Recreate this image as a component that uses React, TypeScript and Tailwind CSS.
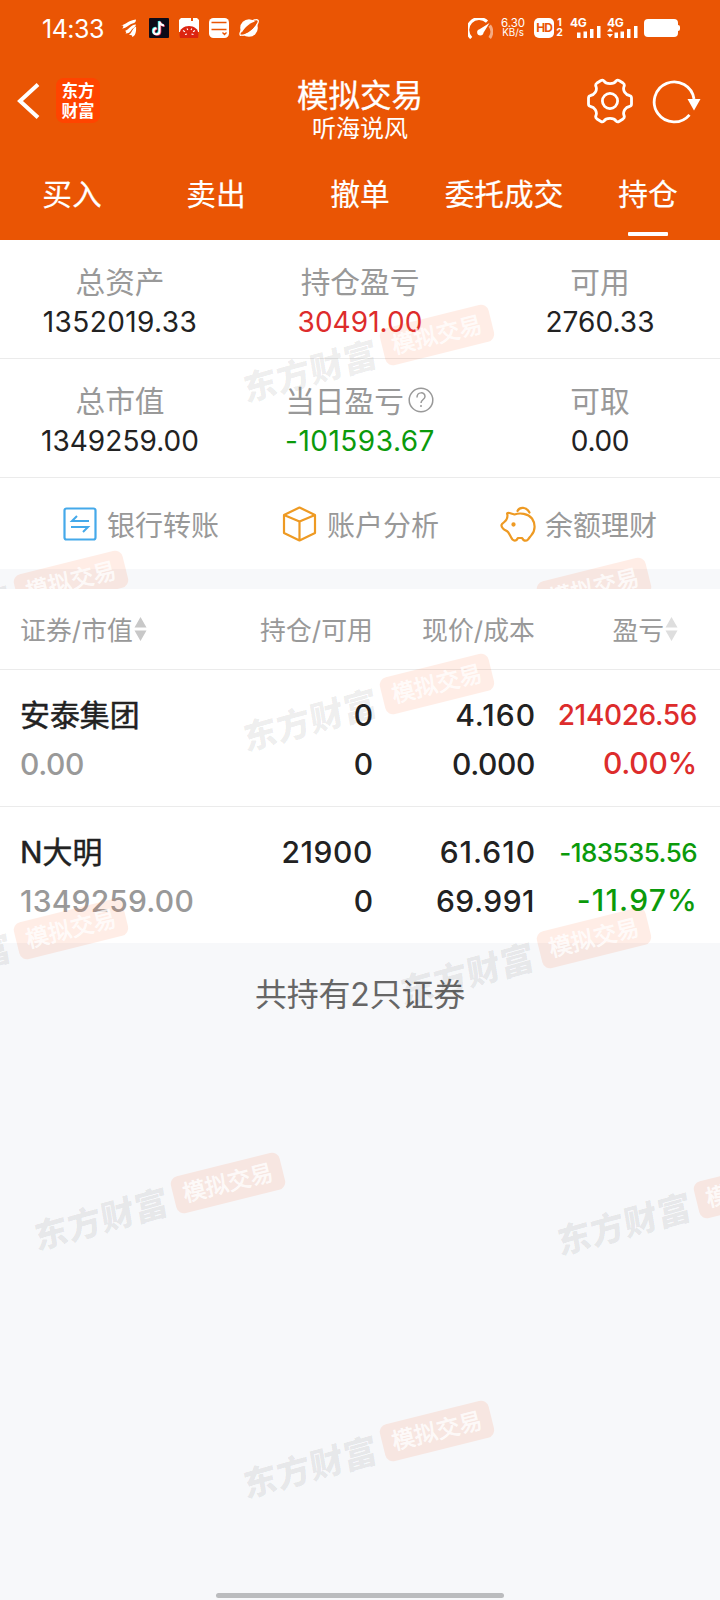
import React from "react";

type Tone = "dark" | "red" | "green";

const toneClass: Record<Tone, string> = {
  dark: "text-[#222222]",
  red: "text-[#dd2c2c]",
  green: "text-[#0b9a0b]",
};

const latin = "font-['Inter','Noto_Sans_CJK_SC',sans-serif]";

function Watermark({ x, y }: { x: number; y: number }) {
  return (
    <div
      className="pointer-events-none absolute flex h-[38px] w-[254px] origin-[198px_19px] -rotate-[14deg] items-center justify-between"
      style={{ left: x - 140, top: y + 12 }}
      aria-hidden
    >
      <span className="-translate-x-[3px] translate-y-[5px] -rotate-[1.5deg] -skew-x-6 whitespace-nowrap text-[34px] leading-none font-black tracking-[0.6px] text-black/[0.075]">
        东方财富
      </span>
      <span className="flex h-[38px] w-[112px] items-center justify-center rounded-[8px] bg-[#ff5a1e]/[0.11] text-[23px] leading-none whitespace-nowrap text-white/75 [-webkit-text-stroke:0.6px_rgba(255,255,255,0.75)]">
        模拟交易
      </span>
    </div>
  );
}

function StatusBar() {
  return (
    <div className="flex h-[56px] items-center pr-[40px] pl-[42px] text-white">
      <span className="w-[64px] whitespace-nowrap pt-[2px] text-[25px] leading-none tracking-[-0.5px]">14:33</span>
      <svg className="ml-[15px]" width="16" height="18" viewBox="0 0 16 18" fill="#fff">
        <path d="M0 6.500C5 5.500 7 1.500 15 .5c0 2.500-1 3.500-3.500 4C7.500 5.500 6 9 1 9.500c1.500-1 1.500-2 1-3zM4 12c4-1.500 5-6 11-6.500-.5 3-3.500 3.500-4.500 5.500-1.500 2.500-3 3.500-6 3.500 1-1 1-2-.5-2.500zM8 16c3-2 3.500-7 7-8.500.5 4.500-.5 10-4 10.500.5-1.200.5-2.500-3-2z" />
      </svg>
      <svg className="ml-[12px]" width="20" height="20" viewBox="0 0 20 20">
        <rect width="20" height="20" rx="1" fill="#0d0b18" />
        <g fill="none" strokeWidth="2">
          <path d="M10.500 3.500v9.700a3 3 0 1 1-3-3M10.500 3.500c.5 2.500 2 3.700 4.500 3.900" stroke="#26e6e0" transform="translate(-.7 -.5)" />
          <path d="M10.500 3.500v9.700a3 3 0 1 1-3-3M10.500 3.500c.5 2.500 2 3.700 4.500 3.900" stroke="#f23a5e" transform="translate(.8 .5)" />
          <path d="M10.500 3.500v9.700a3 3 0 1 1-3-3M10.500 3.500c.5 2.500 2 3.700 4.500 3.900" stroke="#fff" />
        </g>
      </svg>
      <svg className="ml-[10px]" width="20" height="20" viewBox="0 0 20 20">
        <path d="M2 0h10v3h2V0h4l2 2v12H0V2z" fill="#fff" />
        <path d="M1 20C-1 12 4 8 10 8s11 4 9 12z" fill="#dc2410" />
        <path d="M4 12.500l2 1.200M8 10.500l.8 1.500M12 12l.8-1.500M16 12.500l-2 1.200M6 16.500l2-.5M12.500 16l2 .5" stroke="#fff" strokeWidth="1.100" />
      </svg>
      <svg className="ml-[10px]" width="20" height="20" viewBox="0 0 20 20">
        <rect width="20" height="20" rx="4.500" fill="#fff" />
        <path d="M2.500 4.500h15M2.500 11.500h15" stroke="#ea5504" strokeWidth="1.600" />
        <path d="M13.500 14.500l2 2 2-2" stroke="#ea5504" strokeWidth="1.300" fill="none" />
      </svg>
      <svg className="ml-[10px]" width="20" height="20" viewBox="0 0 20 20">
        <circle cx="10" cy="10" r="8.800" fill="#fff" />
        <path d="M1.500 17.500C4 11 9.500 5 19 2.500c-2 7-8 13-17.500 15z" fill="#ea5504" />
        <path d="M3 17C-.5 19 .5 12.500 6 7.500c5-4.500 11.500-7 13-5.200C20.500 4 16 11 10 14.800c-3 1.800-6 3-7 2.200z" fill="none" stroke="#fff" strokeWidth="1.300" />
      </svg>

      <div className="ml-auto flex items-center">
        <svg width="25" height="21" viewBox="0 0 25 21" fill="none">
          <path d="M3.200 20A10.500 10.500 0 0 1 19 3.700" stroke="#fff" strokeWidth="3" />
          <path d="M21.700 7.500a10.500 10.500 0 0 1 0 12.500" stroke="#fff" strokeOpacity=".5" strokeWidth="3" />
          <path d="M21.500 5l-6 9.800a3.200 3.200 0 1 1-4-3.600z" fill="#fff" />
        </svg>
        <span className="ml-[7px] flex w-[26px] flex-col items-center text-[11.500px] leading-[10.500px]">
          <span>6.30</span>
          <span className="text-[9.800px]">KB/s</span>
        </span>
        <span className="ml-[8px] flex h-[20px] w-[20px] items-center justify-center rounded-[5px] bg-white text-[12px] leading-none font-bold tracking-[-1px] text-[#ea5504]">
          HD
        </span>
        <span className="ml-[2px] flex w-[7px] flex-col items-center text-[10.500px] leading-[10px] font-bold">
          <span>1</span>
          <span>2</span>
        </span>
        <div className="ml-[7px] flex h-[20px] w-[31px] flex-col justify-between">
          <span className="text-[12px] leading-[10px] font-bold tracking-[-0.3px]">4G</span>
          <svg className="-mt-[3px] ml-[7px]" width="24" height="12" viewBox="0 0 24 12" fill="#fff">
            <path d="M0 6.500h3.500v5.500H0zM6.500 5.500H10v6.500H6.500zM13 3h3.500v9H13zM20 0h3.500v12H20z" />
          </svg>
        </div>
        <div className="ml-[6px] flex h-[20px] w-[32px] flex-col justify-between">
          <span className="text-[12px] leading-[10px] font-bold tracking-[-0.3px]">4G</span>
          <svg className="-mt-[3px]" width="31" height="12" viewBox="0 0 31 12" fill="#fff">
            <path d="M0 5.500L3 2l3 3.500zM0 8l3 3.500L6 8zM7.500 6.500H11v5.500H7.500zM13.500 5.500H17v6.500h-3.500zM20 3h3.500v9H20zM27 0h3.500v12H27z" />
          </svg>
        </div>
        <div className="ml-[5px] h-[18px] w-[34px] rounded-[4px] bg-white" />
        <div className="h-[6px] w-[2px] rounded-r-sm bg-white" />
      </div>
    </div>
  );
}

function TitleBar() {
  return (
    <div className="grid h-[98px] grid-cols-[1fr_auto_1fr] text-white">
      <div className="flex items-start pl-[15px]">
        <svg className="mt-[25px]" width="26" height="40" viewBox="0 0 26 40" fill="none" stroke="#fff" strokeWidth="4">
          <path d="M23 3.500L5 20l18 16.500" />
        </svg>
        <div className="mt-[22px] ml-[15px] flex h-[45px] w-[44px] flex-col items-center justify-center rounded-[8px] bg-[#ff4400] text-[16.500px] leading-[20px] font-bold">
          <span>东方</span>
          <span>财富</span>
        </div>
      </div>
      <div className="flex flex-col items-center pt-[22px]">
        <div className="text-[31.500px] leading-[36px] [-webkit-text-stroke:0.3px_#fff]">模拟交易</div>
        <div className="text-[24px] leading-[30px]">听海说风</div>
      </div>
      <div className="flex items-start justify-end pt-[22px] pr-[19px]">
        <svg width="46" height="46" viewBox="0 0 46 46" fill="none" stroke="#fff" strokeWidth="2.800" strokeLinejoin="round">
          <path d="M17 3C19 6.500 27 6.500 29 3Q30.500 1.500 32 2.500L36 5Q38 6.500 37 8.500C35.500 12.500 38.500 17 42.500 17.500Q44.500 18 44.500 20V26Q44.500 28 42.500 28.500C38.500 29 35.500 33.500 37 37.500Q38 39.500 36 41L32 43.500Q30.500 44.500 29 43C27 39.500 19 39.500 17 43Q15.500 44.500 14 43.500L10 41Q8 39.500 9 37.500C10.500 33.500 7.500 29 3.500 28.500Q1.500 28 1.500 26V20Q1.500 18 3.500 17.500C7.500 17 10.500 12.500 9 8.500Q8 6.500 10 5L14 2.500Q15.500 1.500 17 3Z" />
          <circle cx="23" cy="23" r="7.600" />
        </svg>
        <svg className="ml-[19px]" width="49" height="46" viewBox="0 0 49 46" fill="none">
          <path d="M37.500 36.800A20 20 0 1 1 42 21" stroke="#fff" strokeWidth="2.800" />
          <path d="M35.500 21h13L42 32.500z" fill="#fff" />
        </svg>
      </div>
    </div>
  );
}

function Tabs() {
  const tabs = ["买入", "卖出", "撤单", "委托成交", "持仓"];
  return (
    <nav className="grid h-[86px] grid-cols-5 text-white">
      {tabs.map((t, i) => (
        <div key={t} className="flex flex-col items-center pt-[20px]">
          <span className="text-[29.700px] leading-[40px] whitespace-nowrap [-webkit-text-stroke:0.2px_#fff]">{t}</span>
          {i === 4 && <span className="mt-[18px] h-[4px] w-[40px] rounded-[1px] bg-white" />}
        </div>
      ))}
    </nav>
  );
}

type StatProps = { label: string; value: string; tone?: Tone; help?: boolean; tracking?: string };

function Stat({ label, value, tone = "dark", help, tracking = "tracking-[0.05px]" }: StatProps) {
  return (
    <div className="flex flex-col items-center pt-[22px]">
      <div className="flex h-[40px] items-center text-[29.700px] leading-[40px] text-[#999999]">
        {label}
        {help && (
          <svg className="mr-[1px] mb-[3px] ml-[4px]" width="26" height="26" viewBox="0 0 26 26" fill="none" stroke="#999" strokeWidth="1.500">
            <circle cx="13" cy="13" r="11.800" />
            <path d="M9 10.500c0-6 8-6 8-1 0 3-4 3-4 6.500M13 18v2" />
          </svg>
        )}
      </div>
      <div className={`text-[28px] leading-[40px] ${tracking} ${toneClass[tone]}`}>{value}</div>
    </div>
  );
}

function Sorter({ color }: { color: string }) {
  return (
    <svg className="ml-px" width="13" height="24" viewBox="0 0 13 24" fill={color}>
      <path d="M6.500 0l6 10.500H.5zM6.500 24l-6-10.500h12z" />
    </svg>
  );
}

type Cell = { text: string; fit: string };

type Holding = {
  name: string;
  market: Cell;
  qty: Cell;
  avail: Cell;
  price: Cell;
  cost: Cell;
  pl: Cell;
  rate: Cell;
  tone: Tone;
};

const holdings: Holding[] = [
  {
    name: "安泰集团",
    market: { text: "0.00", fit: "tracking-[-0.4px]" },
    qty: { text: "0", fit: "" },
    avail: { text: "0", fit: "" },
    price: { text: "4.160", fit: "tracking-[1px] -mr-px" },
    cost: { text: "0.000", fit: "tracking-[-0.4px]" },
    pl: { text: "214026.56", fit: "text-[28px] tracking-[-0.35px]" },
    rate: { text: "0.00%", fit: "tracking-[-0.3px]" },
    tone: "red",
  },
  {
    name: "N大明",
    market: { text: "1349259.00", fit: "tracking-[0.2px]" },
    qty: { text: "21900", fit: "tracking-[0.6px]" },
    avail: { text: "0", fit: "" },
    price: { text: "61.610", fit: "tracking-[1px] -mr-px" },
    cost: { text: "69.991", fit: "tracking-[0.5px]" },
    pl: { text: "-183535.56", fit: "text-[26px] tracking-[-0.55px]" },
    rate: { text: "-11.97%", fit: "tracking-[1.2px] -mr-px" },
    tone: "green",
  },
];

const columns = "grid grid-cols-[201px_152px_162px_162px] pl-[20px]";

function HoldingRow({ h }: { h: Holding }) {
  return (
    <div className={`${columns} pt-[21px] text-[30px] leading-[49px] font-medium whitespace-nowrap text-[#222222]`}>
      <div>
        <div className="text-[29.900px] font-normal [-webkit-text-stroke:0.5px_#222]">{h.name}</div>
        <div className={`text-[#999999] ${h.market.fit}`}>{h.market.text}</div>
      </div>
      <div className="text-right">
        <div className={h.qty.fit}>{h.qty.text}</div>
        <div className={h.avail.fit}>{h.avail.text}</div>
      </div>
      <div className="text-right">
        <div className={h.price.fit}>{h.price.text}</div>
        <div className={h.cost.fit}>{h.cost.text}</div>
      </div>
      <div className={`text-right ${toneClass[h.tone]}`}>
        <div className={h.pl.fit}>{h.pl.text}</div>
        <div className={`-mt-px ${h.rate.fit}`}>{h.rate.text}</div>
      </div>
    </div>
  );
}

export default function App() {
  return (
    <div className={`h-[1600px] w-[720px] overflow-hidden bg-[#f7f8fa] ${latin}`} lang="zh-CN">
      <div className="relative h-[589px] overflow-hidden">
        <header className="h-[240px] bg-[#ea5504]">
          <StatusBar />
          <TitleBar />
          <Tabs />
        </header>
        <section className="bg-white">
          <div className="grid h-[119px] grid-cols-3 border-b border-[#ebebeb]">
            <Stat label="总资产" value="1352019.33" tracking="tracking-[0.4px]" />
            <Stat label="持仓盈亏" value="30491.00" tone="red" />
            <Stat label="可用" value="2760.33" />
          </div>
          <div className="grid h-[119px] grid-cols-3 border-b border-[#ebebeb]">
            <Stat label="总市值" value="1349259.00" />
            <Stat label="当日盈亏" value="-101593.67" tone="green" help tracking="tracking-[0.5px]" />
            <Stat label="可取" value="0.00" tracking="tracking-[-0.3px]" />
          </div>
          <div className="flex h-[91px] items-center pl-[63px] text-[28px] leading-none whitespace-nowrap text-[#999999]">
            <div className="flex w-[219px] items-center">
              <svg width="34" height="34" viewBox="0 0 34 34" fill="none" stroke="#45a9ea">
                <rect x="1.500" y="1.500" width="31" height="31" rx="2" strokeWidth="2.200" />
                <path d="M26 14H9l5-5M8 20h17l-5 5" strokeWidth="2" />
              </svg>
              <span className="mt-[5px] ml-[10px]">银行转账</span>
            </div>
            <div className="flex w-[218px] items-center">
              <svg width="35" height="36" viewBox="0 0 35 36" fill="none" stroke="#ee9a23" strokeWidth="2.200" strokeLinejoin="round">
                <path d="M17.500 1.500L33 9v18L17.500 34.500 2 27V9zM2 9l15.500 6.500L33 9M17.500 15.500v19" />
              </svg>
              <span className="mt-[5px] ml-[10px]">账户分析</span>
            </div>
            <div className="flex items-center">
              <svg width="37" height="36" viewBox="0 0 37 36" fill="none" stroke="#ee9a23" strokeWidth="2.200" strokeLinejoin="round" strokeLinecap="round">
                <path d="M7.500 9C6.500 7 7.500 6.500 9.500 7l5 1.500C20 6.500 28 7.500 32 12.500c3.500 5 3.500 12-.5 16.500-1 1.500-2 2.500-3.500 4.500-1.500 1.500-3 1.500-4.500.5l-1.500-2h-4l-1.500 2c-1.500 1-3 .5-4-.5-2-2.500-2.500-5-4.500-7.500-1.500-1.500-3-1.500-5-3.500C1.500 21 1 19.500 2 18c2-2 3.500-2.500 4.500-4.500C7.500 12 7.500 10.500 7.500 9z" />
                <path d="M17.500 5c2-4.500 9-4.500 12 1.500" />
                <circle cx="13.500" cy="18.500" r="1.400" fill="#ee9a23" strokeWidth="1.500" />
              </svg>
              <span className="mt-[5px] ml-[8px]">余额理财</span>
            </div>
          </div>
        </section>
        <Watermark x={379} y={304} />
        <Watermark x={13} y={550} />
        <Watermark x={536} y={557} />
      </div>

      <div className="relative h-[1011px] overflow-hidden">
        <section className="h-[354px] bg-white">
          <div className={`${columns} h-[81px] items-center border-b border-[#ebebeb] text-[25.800px] leading-none whitespace-nowrap text-[#999999]`}>
            <div className="flex items-center">
              <span className="mt-[3px] tracking-[0.1px]">证券/市值</span>
              <Sorter color="#c8c8c8" />
            </div>
            <div className="pt-[3px] text-right tracking-[0.1px]">持仓/可用</div>
            <div className="pt-[3px] text-right tracking-[0.1px]">现价/成本</div>
            <div className="flex items-center justify-end pr-[19px]">
              <span className="mt-[3px]">盈亏</span>
              <Sorter color="#dedede" />
            </div>
          </div>
          <div className="h-[137px] border-b border-[#ebebeb]">
            <HoldingRow h={holdings[0]} />
          </div>
          <div className="h-[136px]">
            <HoldingRow h={holdings[1]} />
          </div>
        </section>
        <div className="pt-[32px] text-center text-[32px] leading-[40px] tracking-[-0.2px] text-[#666666]">共持有2只证券</div>
        <div className="absolute bottom-[2px] left-[216px] h-[5px] w-[288px] rounded-full bg-[#bbbcbe]" />
        <Watermark x={379} y={64} />
        <Watermark x={13} y={309} />
        <Watermark x={536} y={318} />
        <Watermark x={170} y={563} />
        <Watermark x={693} y={568} />
        <Watermark x={379} y={811} />
      </div>
    </div>
  );
}
